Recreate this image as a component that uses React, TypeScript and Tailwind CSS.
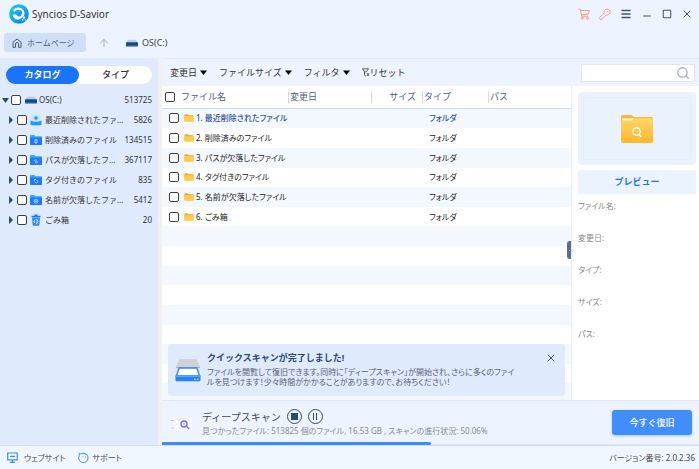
import type { ReactNode } from "react";
import { Menu, Minus, Square, X, ArrowUp, Search } from "lucide-react";

const tree = [
  { name: "最近削除されたファ…", count: "5826", icon: "inbox" },
  { name: "削除済みのファイル", count: "134515", icon: "trash" },
  { name: "パスが欠落したフ…", count: "367117", icon: "link" },
  { name: "タグ付きのファイル", count: "835", icon: "tag" },
  { name: "名前が欠落したファ…", count: "5412", icon: "at" },
  { name: "ごみ箱", count: "20", icon: "bin" },
];

const rows = [
  "1. 最近削除されたファイル",
  "2. 削除済みのファイル",
  "3. パスが欠落したファイル",
  "4. タグ付きのファイル",
  "5. 名前が欠落したファイル",
  "6. ごみ箱",
];

const details = ["ファイル名:", "変更日:", "タイプ:", "サイズ:", "パス:"];

function Check({ label }: { label: string }) {
  return (
    <input
      type="checkbox"
      aria-label={label}
      className="block size-[10px] shrink-0 appearance-none rounded-[2px] border border-[#3d3f44] bg-white checked:bg-[#1a73fb]"
    />
  );
}

function Logo() {
  return (
    <svg viewBox="0 0 20 20" className="size-5 shrink-0">
      <defs>
        <linearGradient id="logo" x1="0" y1="0" x2="1" y2="1">
          <stop offset="0" stopColor="#12d4fa" />
          <stop offset="1" stopColor="#0a78f0" />
        </linearGradient>
      </defs>
      <circle cx="10" cy="10" r="9.8" fill="url(#logo)" />
      <path d="M5.300 6.500C7.500 3.800 12 4 13.700 6.800c1.100 2 .6 3.900-.5 5.200" fill="none" stroke="#fff" strokeWidth="2.200" strokeLinecap="round" />
      <path d="M3.600 11c1.800-1.300 3.200-.6 4.500.5 1.500 1.300 3.300 1.300 5.200.3-.2 2.600-2.200 4-4.600 3.800-2.700-.2-4.600-2-5.100-4.600z" fill="#fff" />
      <circle cx="15" cy="13.600" r="1.200" fill="#fff" />
      <circle cx="13.600" cy="15.800" r=".9" fill="#fff" />
      <circle cx="16.300" cy="15.800" r=".6" fill="#fff" />
    </svg>
  );
}

function Drive() {
  return (
    <svg viewBox="0 0 12 8" className="h-2 w-3 shrink-0">
      <path d="M2 .8h8L12 4H0z" fill="#b9cdea" />
      <rect y="3.200" width="12" height="4" rx=".6" fill="#1c4688" />
      <rect y="6.400" width="12" height="1" rx=".5" fill="#3f78c8" />
    </svg>
  );
}

function TreeIcon({ kind }: { kind: string }) {
  if (kind === "inbox")
    return (
      <svg viewBox="0 0 12 12" className="size-3 shrink-0">
        <rect x="1.500" y="1" width="9" height="7" rx="1" fill="#c8e4ff" />
        <circle cx="6" cy="4" r="1.800" fill="#2f8bff" />
        <path d="M.5 6.500L3.500 7.800h5l3-1.300v3.700a1 1 0 0 1-1 1h-9a1 1 0 0 1-1-1z" fill="#1b9bff" />
      </svg>
    );
  if (kind === "bin")
    return (
      <svg viewBox="0 0 12 12" className="size-3 shrink-0">
        <path d="M1.500 1.800h9v1.500h-9zM4.500.5h3v1.300h-3z" fill="#1479f5" />
        <path d="M2 3.600h8l-.6 7.200a1 1 0 0 1-1 .9H3.600a1 1 0 0 1-1-.9z" fill="#2a8dff" />
        <circle cx="6" cy="7.500" r="1.800" fill="none" stroke="#fff" strokeWidth="1" strokeDasharray="2.600 1.100" />
      </svg>
    );
  return (
    <svg viewBox="0 0 12 12" className="size-3 shrink-0">
      <path d="M0 1.800a.8.8 0 0 1 .8-.8h3.400l1.200 1.200h5.800a.8.8 0 0 1 .8.8v7a1 1 0 0 1-1 1H1a1 1 0 0 1-1-1z" fill="#27b0ff" />
      <path d="M0 3.500h12V10a1 1 0 0 1-1 1H1a1 1 0 0 1-1-1z" fill="#2079f7" />
      {kind === "trash" && <path d="M4.500 6h3M5 6.500v2.500h2V6.500M5.500 5.300h1" fill="none" stroke="#cfe6ff" strokeWidth=".8" />}
      {kind === "link" && <path d="M4.200 7.200a1.500 1.500 0 0 1 2.600-1M7.800 7.400a1.500 1.500 0 0 1-2.600 1M5 7.300h2" fill="none" stroke="#b9d8ff" strokeWidth=".8" />}
      {kind === "tag" && <path d="M4.300 5.500h1.800l1.900 2-1.600 1.600-2.100-2z" fill="none" stroke="#b9d8ff" strokeWidth=".8" />}
      {kind === "at" && (
        <g fill="none" stroke="#cfe6ff" strokeWidth=".7">
          <circle cx="6" cy="7.200" r="2" />
          <circle cx="6" cy="7.200" r=".7" />
        </g>
      )}
    </svg>
  );
}

function SmallFolder() {
  return (
    <svg viewBox="0 0 10 8" className="h-2 w-[10px] shrink-0">
      <path d="M.5 1a.7.7 0 0 1 .7-.7h2.400l1 1H9a.6.6 0 0 1 .6.6v5.400H.5z" fill="#f7a81b" />
      <path d="M.5 2.300h9v4.800a.6.6 0 0 1-.6.600H1.100a.6.600 0 0 1-.6-.6z" fill="#ffcd4b" />
    </svg>
  );
}

function PreviewFolder() {
  return (
    <svg viewBox="0 0 34 30" className="h-[30px] w-[34px]">
      <defs>
        <linearGradient id="pf" x1="0" y1="0" x2="0" y2="1">
          <stop offset="0" stopColor="#ffd766" />
          <stop offset="1" stopColor="#fdb62c" />
        </linearGradient>
      </defs>
      <path d="M1 2.500A1.500 1.500 0 0 1 2.500 1H11l3.500 2H31.500A1.500 1.500 0 0 1 33 4.500V12H1z" fill="#f9b934" />
      <path d="M1 6.500h10.500L15.500 4.300h16A1.500 1.500 0 0 1 33 5.800V27a2 2 0 0 1-2 2H3a2 2 0 0 1-2-2z" fill="url(#pf)" />
      <path d="M2.300 4.500h12l-3 2h-9z" fill="#fffaf0" />
      <circle cx="16.500" cy="17.500" r="3.700" fill="none" stroke="#fff" strokeWidth="1.400" />
      <path d="M18.600 20.500l2.200 2" stroke="#fff" strokeWidth="1.400" strokeLinecap="round" />
    </svg>
  );
}

function Scanner() {
  return (
    <svg viewBox="0 0 26 24" className="h-6 w-[26px] shrink-0">
      <path d="M4.500 1h17l3.500 8H1z" fill="#d0d1d5" />
      <path d="M1 9h24v1H1z" fill="#aeb4be" />
      <path d="M4 10h18l2.500 8h-23z" fill="#fff" stroke="#2f86f6" strokeWidth="1.400" />
      <path d="M.5 17.500h25V22a1.200 1.200 0 0 1-1.200 1.200H1.700A1.200 1.200 0 0 1 .5 22z" fill="#2384f7" />
      <path d="M.5 17.500h25v1.500H.5z" fill="#55a8ff" />
      <path d="M19 21.200h1.500M22 21.200h1.500" stroke="#fff" strokeWidth="1" />
    </svg>
  );
}

function Caret() {
  return (
    <svg viewBox="0 0 7 5" className="h-[5px] w-[7px]">
      <path d="M0 .5h7L3.500 5z" fill="#000" />
    </svg>
  );
}

function ToolButton({ children }: { children: ReactNode }) {
  return <button className="flex items-center gap-[3px] whitespace-nowrap">{children}</button>;
}

function HeaderCell({ children, align }: { children: ReactNode; align?: "right" }) {
  return (
    <th className="p-0 font-normal">
      <div className={`h-3 border-l border-[#d5dae2] pl-px leading-3 ${align === "right" ? "pr-1.5 text-right" : "text-left"}`}>{children}</div>
    </th>
  );
}

export default function App() {
  return (
    <div className="flex h-screen flex-col overflow-hidden bg-[#edf4ff] font-['Noto_Sans','Noto_Sans_CJK_JP',sans-serif] text-[8px] leading-3 text-[#333]">
      <header className="flex h-7 shrink-0 items-center justify-between pr-1.5 pl-[9px]">
        <div className="flex items-center gap-[3px]">
          <Logo />
          <h1 className="text-[10px] leading-4">Syncios D-Savior</h1>
        </div>
        <div className="flex items-center gap-[9px] text-[#41527c]">
          <button aria-label="購入" className="text-[#f59b80]">
            <svg viewBox="0 0 12 12" className="size-3" fill="none" stroke="currentColor" strokeWidth="1">
              <path d="M.5 1h1.800l1.300 7.200h6.600M2.600 2.500h8.700l-.8 3.700-7.200.6" />
              <circle cx="4.300" cy="10.200" r="1" />
              <circle cx="9.500" cy="10.200" r="1" />
            </svg>
          </button>
          <button aria-label="登録" className="text-[#f59b80]">
            <svg viewBox="0 0 12 12" className="size-3" fill="none" stroke="currentColor" strokeWidth="1" strokeLinejoin="round">
              <path d="M5.200 5A3 3 0 1 1 7.200 7L3 11.200a1.200 1.200 0 0 1-2-1.900z" />
              <path d="M7.800 2.800l1.500 1.500" />
            </svg>
          </button>
          <button aria-label="メニュー"><Menu className="size-3" strokeWidth={3} /></button>
          <button aria-label="最小化"><Minus className="mt-1 size-3" strokeWidth={2} /></button>
          <button aria-label="最大化"><Square className="size-[10px]" strokeWidth={2.5} /></button>
          <button aria-label="閉じる"><X className="size-3" strokeWidth={2} /></button>
        </div>
      </header>

      <nav className="flex h-[30px] shrink-0 items-center pb-px pl-1">
        <button className="flex h-[19px] w-[82px] items-center gap-[5px] rounded-[3px] bg-[#cfdff7] pl-2 text-[#4b5a70]">
          <svg viewBox="0 0 10 10" className="size-[10px]" fill="none" stroke="currentColor" strokeWidth="1">
            <path d="M1 4.200L5 1l4 3.200V9.300H6.500V6a1.500 1.500 0 0 0-3 0V9.300H1z" />
          </svg>
          ホームページ
        </button>
        <button aria-label="上へ" className="ml-3 text-[#a5b1c4]"><ArrowUp className="size-3" strokeWidth={2} /></button>
        <div className="ml-4 flex items-center gap-1 text-[9px] text-[#444]">
          <Drive />
          OS(C:)
        </div>
      </nav>

      <div className="flex min-h-0 flex-1">
        <aside className="w-[158px] shrink-0 bg-[#dfeafd] pt-2">
          <div className="mx-1.5 flex h-[18px] rounded-full bg-white text-[9px] font-bold">
            <button className="flex-1 rounded-full bg-[#1a73fb] text-white">カタログ</button>
            <button className="flex-1 font-medium">タイプ</button>
          </div>
          <ul className="pt-1.5 pr-1.5">
            <li className="flex h-5 items-center pl-0.5">
              <svg viewBox="0 0 7 5" className="mr-[2px] h-[5px] w-[7px]"><path d="M0 0h7L3.500 5z" fill="#2b4878" /></svg>
              <Check label="OS(C:)" />
              <span className="ml-1 mr-[2px] flex"><Drive /></span>
              <span className="flex-1">OS(C:)</span>
              <span>513725</span>
            </li>
            {tree.map((t) => (
              <li key={t.name} className="flex h-5 items-center pl-[9px]">
                <svg viewBox="0 0 4 8" className="mr-1 h-2 w-1 shrink-0"><path d="M0 0l4 4-4 4z" fill="#2b4878" /></svg>
                <Check label={t.name} />
                <span className="mx-[3px] flex"><TreeIcon kind={t.icon} /></span>
                <span className="flex-1 whitespace-nowrap">{t.name}</span>
                <span>{t.count}</span>
              </li>
            ))}
          </ul>
        </aside>
        <div className="w-1 shrink-0 bg-[#f1f1f1]" />

        <main className="flex min-w-0 flex-1 flex-col border-t border-[#e2ebf9]">
          <div className="flex h-[27px] shrink-0 items-center gap-3 pr-1 pl-2 text-[9px]">
            <ToolButton>変更日<Caret /></ToolButton>
            <ToolButton>ファイルサイズ<Caret /></ToolButton>
            <ToolButton>フィルタ<Caret /></ToolButton>
            <button className="flex items-center whitespace-nowrap">
              <svg viewBox="0 0 8 9" className="h-[9px] w-2" fill="none" stroke="#333" strokeWidth=".8">
                <path d="M.5.8h6L4.500 3.500M.5.8l2 3v3.500l1.500 1M2.500 3.800h2M4.800 5l2.400 3M7.200 5L4.800 8" />
              </svg>
              リセット
            </button>
            <label className="ml-auto flex h-[18px] w-[114px] items-center border border-[#e0e7f2] bg-white pr-1">
              <input type="search" aria-label="検索" className="min-w-0 flex-1 bg-transparent px-1 outline-none" />
              <Search className="size-[14px] text-[#a9adbd]" strokeWidth={2.2} />
            </label>
          </div>

          <div className="flex min-h-0 flex-1 bg-white">
            <section className="relative min-w-0 flex-1 overflow-hidden">
              <table className="h-[317px] w-full table-fixed border-collapse">
                <colgroup>
                  <col className="w-[126px]" />
                  <col className="w-[83px]" />
                  <col className="w-[51px]" />
                  <col className="w-[66px]" />
                  <col />
                </colgroup>
                <thead>
                  <tr className="h-[22px] border-b border-[#d3dae4] text-[9px] text-[#47608c]">
                    <th className="p-0 font-normal">
                      <div className="flex items-center gap-1.5 pl-[3px]"><Check label="すべて選択" />ファイル名</div>
                    </th>
                    <HeaderCell>変更日</HeaderCell>
                    <HeaderCell align="right">サイズ</HeaderCell>
                    <HeaderCell>タイプ</HeaderCell>
                    <HeaderCell>パス</HeaderCell>
                  </tr>
                </thead>
                <tbody>
                  {rows.map((r, i) => (
                    <tr key={r} className={`odd:bg-[#f3f8fe] ${i === 0 ? "font-medium text-[#2f5496]" : "text-[#222]"}`}>
                      <td className="p-0" colSpan={3}>
                        <div className="flex items-center pl-[7px] whitespace-nowrap">
                          <Check label={r} />
                          <span className="ml-[5px] mr-[2px] flex"><SmallFolder /></span>
                          <span className="[font-feature-settings:'palt']">{r}</span>
                        </div>
                      </td>
                      <td className="p-0 pl-[7px] [font-feature-settings:'palt']">フォルダ</td>
                      <td className="p-0" />
                    </tr>
                  ))}
                  {Array.from({ length: 9 }, (_, i) => (
                    <tr key={i} aria-hidden="true" className="odd:bg-[#f3f8fe]">
                      <td className="p-0" colSpan={5}>&nbsp;</td>
                    </tr>
                  ))}
                </tbody>
              </table>

              <button aria-label="プレビューを閉じる" className="absolute top-[155px] right-0 flex h-[18px] w-1 items-center justify-center rounded-l-[3px] bg-[#5d6a9d]">
                <span className="size-px bg-white" />
              </button>

              <div role="status" className="absolute inset-x-1.5 bottom-1 flex h-[52px] rounded-[3px] bg-[#dfeafd] pl-[7px]">
                <div className="mt-[14px]"><Scanner /></div>
                <div className="ml-1.5 pt-2 whitespace-nowrap">
                  <h2 className="text-[9px] leading-3 font-bold text-[#2c4675]">クイックスキャンが完了しました!</h2>
                  <p className="mt-[3px] leading-[10px] text-[#5b6270] [font-feature-settings:'palt']">
                    ファイルを閲覧して復旧できます。同時に「ディープスキャン」が開始され、さらに多くのファイ
                    <br />
                    ルを見つけます！少々時間がかかることがありますので、お待ちください！
                  </p>
                </div>
                <button aria-label="通知を閉じる" className="absolute top-2 right-2 text-[#41527c]"><X className="size-3" strokeWidth={2} /></button>
              </div>
            </section>

            <aside className="w-32 shrink-0 border-l border-[#e3eefa] pt-1.5 pr-[3px] pl-1.5">
              <div className="flex h-[73px] rounded-[4px] bg-[#eaf2fe] p-[5px]">
                <div className="flex flex-1 items-center justify-center border border-[#e6edf8]"><PreviewFolder /></div>
              </div>
              <button className="mt-[5px] block h-6 w-full rounded-[2px] bg-[#eaf3ff] text-[9px] font-bold text-[#1a73fb]">プレビュー</button>
              <dl className="mt-1.5 text-[#858585]">
                {details.map((d) => (
                  <div key={d} className="h-8"><dt className="[font-feature-settings:'palt']">{d}</dt></div>
                ))}
              </dl>
            </aside>
          </div>

          <section className="relative flex h-[45px] shrink-0 items-center border-t border-b border-[#dbe5f3] pr-[7px] pl-[7px]">
            <svg viewBox="0 0 24 14" className="mt-1 h-[14px] w-6 shrink-0">
              <rect x="1" width="22" height="12" rx="1" fill="#f4f6fc" />
              <path d="M2 2.500h3M2 10h3" stroke="#c3c6cf" strokeWidth="1" />
              <path d="M8 1h10" stroke="#dfe2ea" strokeWidth="1" />
              <circle cx="15" cy="6" r="3" fill="#dcd9ff" stroke="#7b6ff0" strokeWidth="1.300" />
              <path d="M17.300 8.300l2.900 2.700" stroke="#7b6ff0" strokeWidth="1.400" />
            </svg>
            <div className="ml-[9px] whitespace-nowrap">
              <div className="flex items-center gap-[6px]">
                <h2 className="text-[10px] leading-4 text-[#3a4a68]">ディープスキャン</h2>
                <button aria-label="停止" className="flex size-[15px] items-center justify-center rounded-full border border-[#2b4878]">
                  <span className="size-[7px] bg-[#2b4878]" />
                </button>
                <button aria-label="一時停止" className="flex size-[15px] items-center justify-center gap-[2px] rounded-full border border-[#2b4878]">
                  <span className="h-[7px] w-px bg-[#2b4878]" />
                  <span className="h-[7px] w-px bg-[#2b4878]" />
                </button>
              </div>
              <p className="text-[#858b96] [font-feature-settings:'palt']">見つかったファイル: 513825 個のファイル, 16.53 GB , スキャンの進行状況: 50.06%</p>
            </div>
            <button className="ml-auto h-[25px] w-20 rounded-[3px] bg-[#428dfc] text-[9px] font-medium text-white shadow-[0_1px_3px_#a9c9fa]">今すぐ復旧</button>
            <div className="absolute inset-x-0 -bottom-px h-[3px]">
              <div className="h-full rounded-r-full bg-[#3b8cff]" style={{ width: "50.06%" }} />
            </div>
          </section>
        </main>
      </div>

      <footer className="flex h-6 shrink-0 items-center border-t border-[#d5deeb] bg-[#f0f6ff] pr-1 pl-[7px] text-[#4a4a4a] [font-feature-settings:'palt']">
        <a href="#website" className="flex items-center gap-1.5">
          <svg viewBox="0 0 11 11" className="size-[11px]" fill="none" stroke="#3b8cff" strokeWidth="1.200">
            <path d="M.7 1h9.600v6.800H.7zM5.500 7.800v2.200M3 10.300h5M3 4.400h5" />
          </svg>
          ウェブサイト
        </a>
        <a href="#support" className="ml-3 flex items-center gap-1">
          <svg viewBox="0 0 11 11" className="size-[11px]" fill="none" stroke="#3b8cff" strokeWidth="1">
            <path d="M1.200 1.200l1.600.8A4.700 4.700 0 1 1 1.300 3.600zM5 4.500v.8M7.500 4.500v.8" />
          </svg>
          サポート
        </a>
        <span className="ml-auto">バージョン番号: 2.0.2.36</span>
      </footer>
    </div>
  );
}
